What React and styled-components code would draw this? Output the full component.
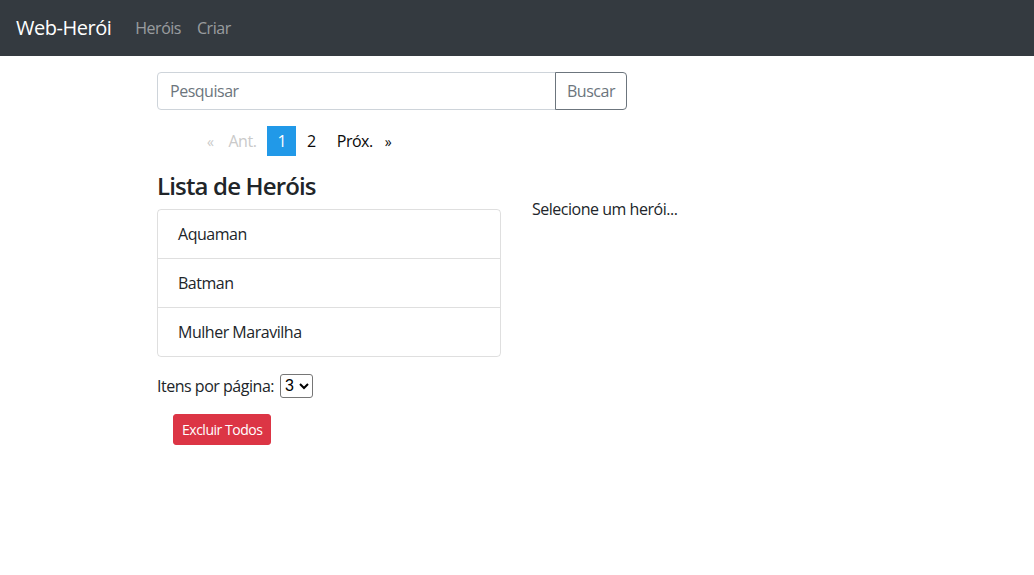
import React, { useState } from 'react'
import styled, { createGlobalStyle } from 'styled-components'

const GlobalStyle = createGlobalStyle`
  body {
    margin: 0;
    font-family: "Open Sans", "Liberation Sans", sans-serif;
    font-size: 16px;
    line-height: 1.5;
    letter-spacing: -0.03em;
    color: #212529;
    background: #fff;
  }
  * { box-sizing: border-box; }
`

const Navbar = styled.nav`
  display: flex;
  align-items: center;
  height: 56px;
  padding: 0 16px;
  background: #343a40;
`

const Brand = styled.a`
  font-size: 20px;
  color: #fff;
  margin-right: 16px;
  padding: 5px 0;
  text-decoration: none;
`

const NavLink = styled.a`
  color: rgba(255, 255, 255, 0.5);
  padding: 8px;
  text-decoration: none;
`

const Main = styled.main`
  padding: 16px 0 0 157px;
`

const SearchGroup = styled.div`
  display: flex;
  width: 470px;
  height: 38px;
`

const SearchInput = styled.input`
  flex: 1;
  font: inherit;
  letter-spacing: inherit;
  padding: 6px 12px;
  border: 1px solid #ced4da;
  border-radius: 4px 0 0 4px;
  color: #495057;
  &::placeholder { color: #6c757d; }
`

const SearchButton = styled.button`
  font: inherit;
  letter-spacing: inherit;
  padding: 6px 11px;
  color: #6c757d;
  background: transparent;
  border: 1px solid #6c757d;
  border-radius: 0 4px 4px 0;
  margin-left: -1px;
`

const Pager = styled.ul`
  display: flex;
  list-style: none;
  margin: 16px 0 16px;
  padding-left: 40px;
`

const PageItem = styled.li`
  margin-right: 1px;
  padding: 3px 10px;
  color: ${p => (p.$disabled ? '#cacaca' : p.$current ? '#fefefe' : '#0a0a0a')};
  background: ${p => (p.$current ? '#2199e8' : 'transparent')};
  cursor: ${p => (p.$disabled ? 'default' : 'pointer')};
`

const Arrow = styled.span`
  font-size: 14px;
  margin: ${p => (p.$after ? '0 0 0 12px' : '0 15px 0 0')};
`

const Columns = styled.div`
  display: flex;
  gap: 31px;
`

const LeftCol = styled.div`
  width: 344px;
`

const Title = styled.h4`
  font-size: 24px;
  font-weight: 600;
  line-height: 1.2;
  letter-spacing: -0.035em;
  margin: 0 0 8px;
`

const ListGroup = styled.ul`
  list-style: none;
  margin: 0;
  padding: 0;
  border: 1px solid rgba(0, 0, 0, 0.125);
  border-radius: 4px;
`

const ListItem = styled.li`
  padding: 12px 20px;
  & + & { border-top: 1px solid rgba(0, 0, 0, 0.125); }
`

const Detail = styled.div`
  padding-top: 25px;
`

const PerPage = styled.div`
  display: flex;
  align-items: center;
  margin-top: 17px;
  height: 24px;
`

const Select = styled.select`
  font-family: "Liberation Sans", sans-serif;
  font-size: 16px;
  margin-left: 6px;
  width: 33px;
  height: 24px;
  padding: 0;
  border: 1px solid #767676;
  border-radius: 3px;
  background: #fff;
  color: #000;
`

const DangerButton = styled.button`
  font: inherit;
  letter-spacing: inherit;
  font-size: 14px;
  line-height: 1.5;
  margin: 16px 0 0 16px;
  padding: 4px 8px;
  color: #fff;
  background: #dc3545;
  border: 1px solid #dc3545;
  border-radius: 3px;
`

export default function App() {
  const [perPage, setPerPage] = useState('3')
  const heroes = ['Aquaman', 'Batman', 'Mulher Maravilha']
  return (
    <>
      <GlobalStyle />
      <Navbar>
        <Brand href="#">Web-Herói</Brand>
        <NavLink href="#">Heróis</NavLink>
        <NavLink href="#">Criar</NavLink>
      </Navbar>
      <Main>
        <SearchGroup>
          <SearchInput placeholder="Pesquisar" />
          <SearchButton>Buscar</SearchButton>
        </SearchGroup>
        <Pager>
          <PageItem $disabled><Arrow>«</Arrow>Ant.</PageItem>
          <PageItem $current>1</PageItem>
          <PageItem>2</PageItem>
          <PageItem>Próx.<Arrow $after>»</Arrow></PageItem>
        </Pager>
        <Columns>
          <LeftCol>
            <Title>Lista de Heróis</Title>
            <ListGroup>
              {heroes.map(h => <ListItem key={h}>{h}</ListItem>)}
            </ListGroup>
            <PerPage>
              Itens por página:
              <Select value={perPage} onChange={e => setPerPage(e.target.value)}>
                <option>3</option>
                <option>5</option>
                <option>10</option>
              </Select>
            </PerPage>
            <DangerButton>Excluir Todos</DangerButton>
          </LeftCol>
          <Detail>Selecione um herói...</Detail>
        </Columns>
      </Main>
    </>
  )
}
